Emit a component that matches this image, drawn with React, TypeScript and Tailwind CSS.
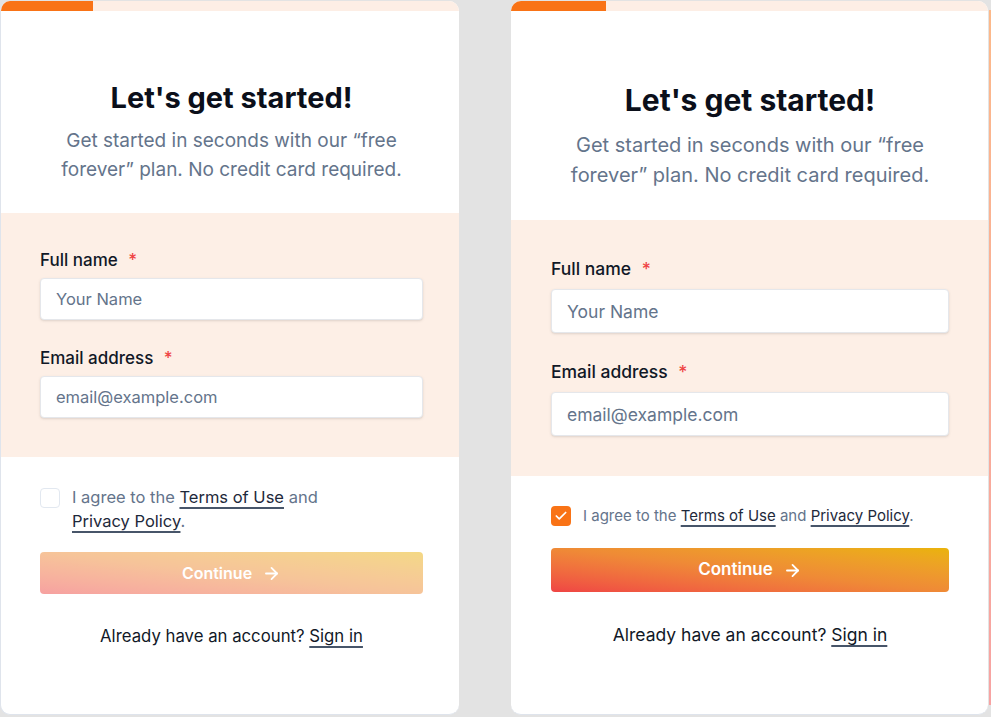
import { ArrowRight, Check } from 'lucide-react';

type Variant = 'left' | 'right';

interface SignupCardProps {
  variant: Variant;
}

// two captures of the same form, the right one a bit larger and with the box ticked
const styles = {
  left: {
    card: 'w-[459px] border-l',
    body: 'pl-[39px] pr-[36px]',
    header: 'pt-[70px] pb-[29px]',
    title: 'text-[29px] leading-[34px]',
    subtitle: 'mt-[11px] text-[19px] leading-[29px]',
    section: 'pt-[35px] pb-[39px]',
    label: 'text-[17px] leading-6 mb-[6px]',
    input: 'h-[42px] text-[16.5px]',
    fieldGap: 'mt-[26px]',
    agree: 'pt-[28px] text-[16.5px] leading-6',
    box: 'mt-[3px]',
    button: 'mt-[19px] h-[42px] text-[16px] opacity-50',
    signin: 'mt-[30px] text-[16.75px] leading-6',
  },
  right: {
    card: 'w-[477px] ml-[52px]',
    body: 'pl-[40px] pr-[39px]',
    header: 'pt-[71px] pb-[30px]',
    title: 'text-[30px] leading-[36px]',
    subtitle: 'mt-[12px] text-[20px] leading-[30px]',
    section: 'pt-[37px] pb-[40px]',
    label: 'text-[17.5px] leading-6 mb-[8px]',
    input: 'h-[44px] text-[17.5px]',
    fieldGap: 'mt-[27px]',
    agree: 'pt-[30px] text-[15px] leading-5',
    box: 'mt-0',
    button: 'mt-[22px] h-[44px] text-[17px]',
    signin: 'mt-[31px] text-[17.5px] leading-6',
  },
};

function SignupCard({ variant }: SignupCardProps) {
  const s = styles[variant];
  const checked = variant === 'right';

  return (
    <div className={`${s.card} mt-[1px] h-[714px] shrink-0 overflow-hidden rounded-[10px] border-b border-[#dfe4ec] bg-white`}>
      <div className="flex h-[10px] bg-[#fdeee5]">
        <div className="h-full w-[20%] bg-[#f97316]" />
      </div>

      <div className={`${s.body} ${s.header} text-center`}>
        <h1 className={`${s.title} font-bold text-[#0b0f1a]`}>Let's get started!</h1>
        <p className={`${s.subtitle} text-[#64748b]`}>
          Get started in seconds with our “free
          <br />
          forever” plan. No credit card required.
        </p>
      </div>

      <div className={`${s.body} ${s.section} bg-[#fdefe6]`}>
        <div>
          <label className={`${s.label} block font-medium text-[#111827]`}>
            Full name <span className="ml-[6px] text-[#ef4444]">*</span>
          </label>
          <input
            type="text"
            placeholder="Your Name"
            className={`${s.input} w-full rounded-[4px] border border-[#e5e7eb] bg-white px-[15px] shadow-sm outline-none placeholder:text-[#64748b]`}
          />
        </div>
        <div className={s.fieldGap}>
          <label className={`${s.label} block font-medium text-[#111827]`}>
            Email address <span className="ml-[6px] text-[#ef4444]">*</span>
          </label>
          <input
            type="email"
            placeholder="email@example.com"
            className={`${s.input} w-full rounded-[4px] border border-[#e5e7eb] bg-white px-[15px] shadow-sm outline-none placeholder:text-[#64748b]`}
          />
        </div>
      </div>

      <div className={s.body}>
        <div className={`${s.agree} flex items-start gap-[12px] text-[#64748b]`}>
          {checked ? (
            <span className={`${s.box} flex h-[20px] w-[20px] shrink-0 items-center justify-center rounded-[4px] bg-[#f97316]`}>
              <Check size={14} strokeWidth={3} className="text-white" />
            </span>
          ) : (
            <span className={`${s.box} h-[20px] w-[20px] shrink-0 rounded-[4px] border border-[#e2e8f0] bg-white`} />
          )}
          <p>
            I agree to the{' '}
            <a className="whitespace-nowrap text-[#1e293b] underline decoration-[#475569] decoration-[1.5px] underline-offset-4">Terms of Use</a>{' '}
            and{' '}
            <a className="whitespace-nowrap text-[#1e293b] underline decoration-[#475569] decoration-[1.5px] underline-offset-4">Privacy Policy</a>.
          </p>
        </div>

        <button
          type="button"
          className={`${s.button} flex w-full items-center justify-center gap-[10px] rounded-[4px] bg-linear-to-tr from-[#ef4444] via-[#ef8a36] to-[#eab308] font-semibold text-white`}
        >
          Continue
          <ArrowRight size={19} strokeWidth={2.25} />
        </button>

        <p className={`${s.signin} text-center text-[#111827]`}>
          Already have an account?{' '}
          <a className="underline decoration-[#475569] decoration-[1.5px] underline-offset-4">Sign in</a>
        </p>
      </div>
    </div>
  );
}

export default function App() {
  return (
    <div className="flex h-[717px] w-[991px] overflow-hidden bg-[#e3e3e3] font-['Inter',sans-serif]">
      <SignupCard variant="left" />
      <SignupCard variant="right" />
      <div className="ml-[1px] mt-[10px] h-[695px] w-[2px] bg-linear-to-b from-[#fcb98a] to-[#f7a3a3]" />
    </div>
  );
}
